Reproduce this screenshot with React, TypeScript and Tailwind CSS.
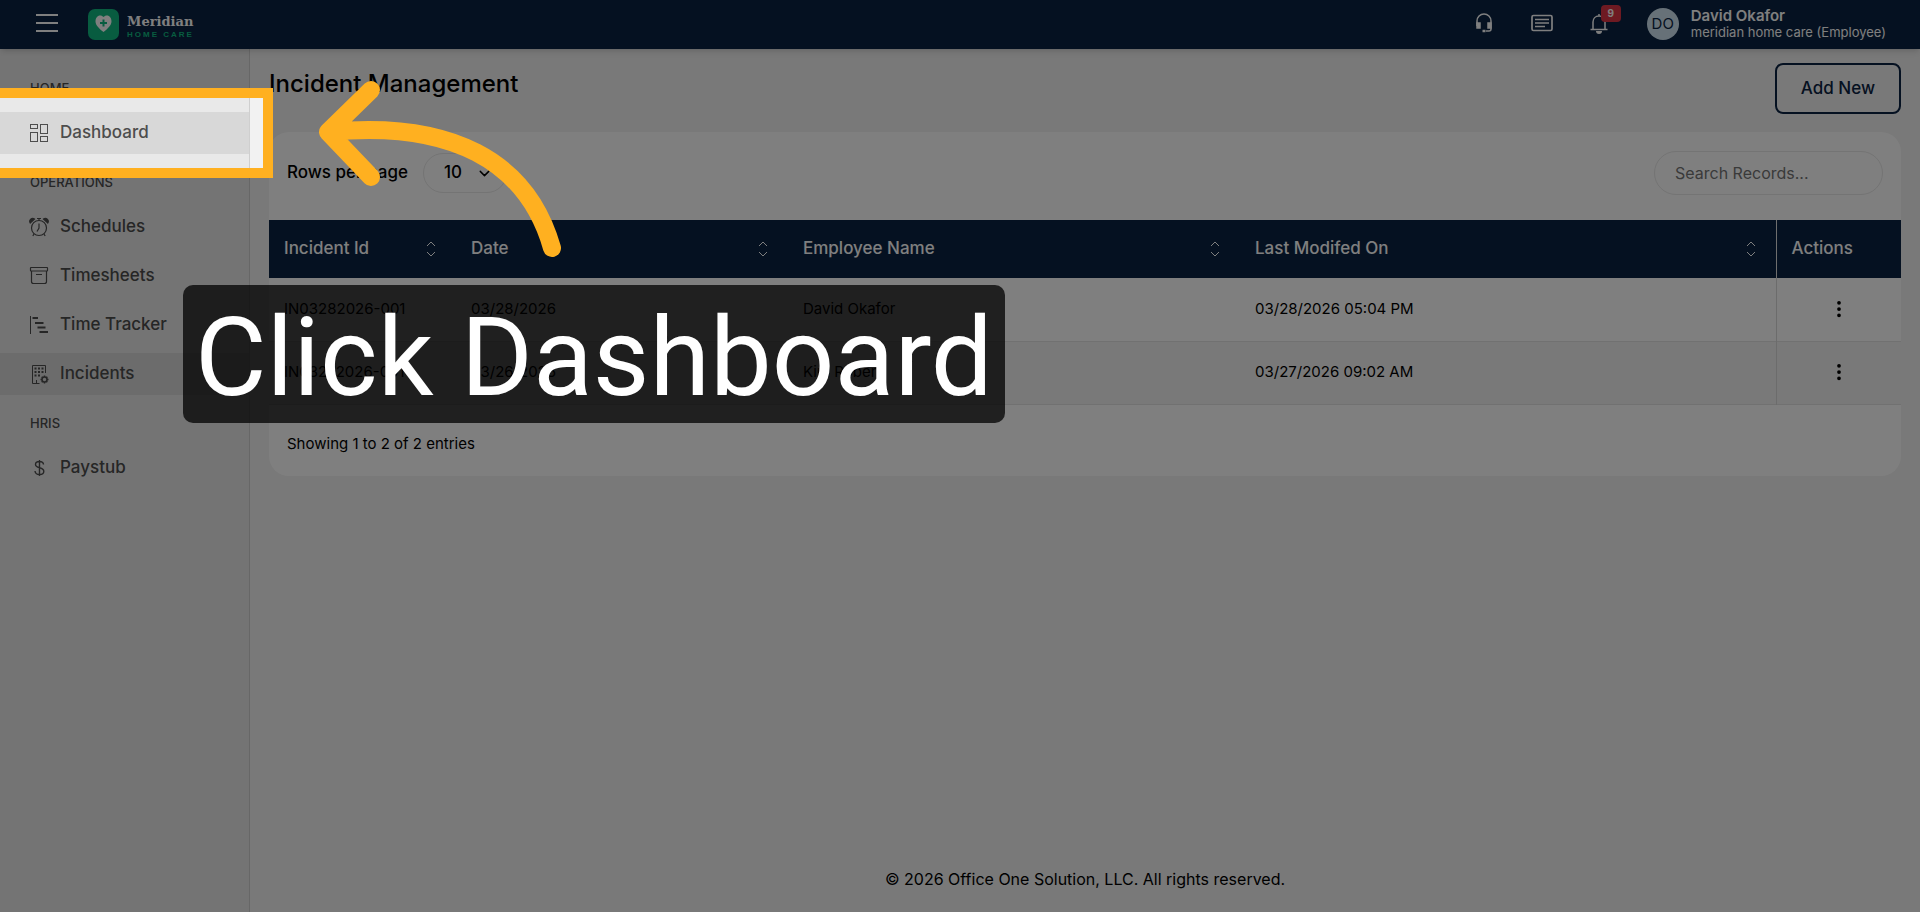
import React from 'react';
import { LuChevronDown } from 'react-icons/lu';
import { BsThreeDotsVertical } from 'react-icons/bs';

interface Incident {
    id: string;
    date: string;
    employee: string;
    modified: string;
}

interface NavItem {
    label: string;
    icon: React.ReactNode;
    active?: boolean;
}

interface NavSection {
    title: string;
    items: NavItem[];
}

const incidents: Incident[] = [
    { id: 'IN03282026-001', date: '03/28/2026', employee: 'David Okafor', modified: '03/28/2026 05:04 PM' },
    { id: 'IN03272026-001', date: '03/26/2026', employee: 'Kim Robert', modified: '03/27/2026 09:02 AM' },
];

const columns = [
    { title: 'Incident Id', width: 'w-[187px]' },
    { title: 'Date', width: 'w-[332px]' },
    { title: 'Employee Name', width: 'w-[452px]' },
    { title: 'Last Modifed On', width: '' },
];

const DashboardIcon = () => (
    <svg width="20" height="20" viewBox="0 0 20 20" fill="none" stroke="currentColor" strokeWidth="1">
        <rect x="1.5" y="1.5" width="7" height="4" />
        <rect x="11.5" y="1.5" width="7" height="9" />
        <rect x="1.5" y="9.5" width="7" height="9" />
        <rect x="11.5" y="13.5" width="7" height="5" />
    </svg>
);

const AlarmIcon = () => (
    <svg width="20" height="20" viewBox="0 0 20 20" fill="none" stroke="currentColor" strokeWidth="1.2">
        <circle cx="10" cy="11" r="7.5" />
        <path d="M10 6.5v4.5l-2 3.5M10 3.5V1.5M8 1.5h4M5 17.2l-1.2 1.8M15 17.2l1.2 1.8" />
        <path d="M1.2 6A3 3 0 0 1 5.5 2L1.2 6zM18.8 6A3 3 0 0 0 14.5 2l4.3 4z" fill="currentColor" />
    </svg>
);

const ArchiveIcon = () => (
    <svg width="20" height="20" viewBox="0 0 20 20" fill="none" stroke="currentColor" strokeWidth="1.2">
        <rect x="1.5" y="1.5" width="17" height="3.5" rx="0.5" />
        <path d="M2.5 5v10.5a2 2 0 0 0 2 2h11a2 2 0 0 0 2-2V5M7 8.5h6" />
    </svg>
);

const TrackerIcon = () => (
    <svg width="20" height="20" viewBox="0 0 20 20" fill="none" stroke="currentColor">
        <path d="M1.5 1v18" strokeWidth="1" />
        <path d="M3.5 3h5.5M6 8h8.5M8.5 12.5h8M10.5 17h8.5" strokeWidth="2" />
    </svg>
);

const BuildingIcon = () => (
    <svg width="20" height="20" viewBox="0 0 20 20" fill="none" stroke="currentColor" strokeWidth="1">
        <path d="M10.5 19.5h-7V1.5h13V9M7.5 19.5v-3.5" />
        <path d="M5.5 4.5h2M9 4.5h2M12.5 4.5h2M5.5 8h2M9 8h2M12.5 8h2M5.5 11.5h2M9 11.5h2" strokeWidth="2" />
        <circle cx="15.5" cy="15.5" r="2.5" strokeWidth="1.5" />
        <path d="M15.5 11.5v1.5M15.5 18v1.5M11.5 15.5h1.5M18 15.5h1.5M12.7 12.7l1 1M17.3 17.3l1 1M18.3 12.7l-1 1M12.7 18.3l1-1" strokeWidth="1.5" />
    </svg>
);

const DollarIcon = () => (
    <svg width="20" height="20" viewBox="0 0 20 20" fill="none" stroke="currentColor" strokeWidth="1.4">
        <path d="M10.5 2v16M14.5 6.5c-.2-2-1.7-3-4-3-2.5 0-4 1.1-4 3 0 4.5 8.3 2 8.3 6.7 0 2-1.7 3.3-4.3 3.3-2.7 0-4.3-1.2-4.5-3.5" />
    </svg>
);

const SortIcon = () => (
    <svg width="10" height="16" viewBox="0 0 10 16" fill="none" stroke="currentColor" strokeWidth="1">
        <path d="M1 5l4-4 4 4M1 11l4 4 4-4" />
    </svg>
);

const sections: NavSection[] = [
    { title: 'HOME', items: [{ label: 'Dashboard', icon: <DashboardIcon />, active: true }] },
    {
        title: 'OPERATIONS',
        items: [
            { label: 'Schedules', icon: <AlarmIcon /> },
            { label: 'Timesheets', icon: <ArchiveIcon /> },
            { label: 'Time Tracker', icon: <TrackerIcon /> },
            { label: 'Incidents', icon: <BuildingIcon />, active: true },
        ],
    },
    { title: 'HRIS', items: [{ label: 'Paystub', icon: <DollarIcon /> }] },
];

const Header = () => (
    <header className="relative flex h-[49px] items-center bg-[#0a2242] pr-8 pb-[3px] pl-9 text-white shadow-md">
        <button aria-label="Toggle menu" className="flex w-[22px] flex-col gap-[6px]">
            <span className="h-[2px] w-full bg-white"></span>
            <span className="h-[2px] w-full bg-white"></span>
            <span className="h-[2px] w-full bg-white"></span>
        </button>

        <a href="#" className="ml-[30px] flex items-center gap-2 pt-[3px]">
            <svg width="31" height="31" viewBox="0 0 31 31">
                <rect width="31" height="31" rx="7" fill="#10b981" />
                <path d="M15.5 23C11 19.5 7.5 16 7.5 12.5c0-3.5 2-6 4.5-6 1.5 0 2.7.6 3.5 1.5.8-.9 2-1.5 3.5-1.5 2.5 0 4.5 2.5 4.5 6 0 3.5-3.5 7-8 10.5z" fill="#fff" />
                <path d="M15.5 10.5v7M12 14h7" stroke="#10b981" strokeWidth="2" />
            </svg>
            <span className="flex flex-col pt-[6px]">
                <span className="font-['DejaVu_Serif',serif] text-[13px] leading-[14px] font-bold">Meridian</span>
                <span className="font-['Liberation_Sans',sans-serif] text-[8px] leading-[11px] font-bold tracking-[2px] text-[#10b981]">HOME CARE</span>
            </span>
        </a>

        <div className="ml-auto flex items-center">
            <button aria-label="Support" className="mr-[37px]">
                <svg width="20" height="20" viewBox="0 0 20 20" fill="none" stroke="currentColor" strokeWidth="1.5">
                    <path d="M3 13V8a7 7 0 0 1 14 0v8a2 2 0 0 1-2 2h-3" />
                    <rect x="3" y="10" width="3" height="5" fill="currentColor" />
                    <rect x="14" y="10" width="3" height="5" fill="currentColor" />
                    <path d="M8.5 18h3" strokeWidth="2.5" />
                </svg>
            </button>
            <button aria-label="Messages" className="mr-[36px]">
                <svg width="22" height="18" viewBox="0 0 22 18" fill="none" stroke="currentColor" strokeWidth="1.7">
                    <rect x="1" y="1.5" width="20" height="15" rx="1.5" />
                    <path d="M4 5.5h14M4 9h14M4 12.5h10" />
                </svg>
            </button>
            <button aria-label="Notifications" className="relative mr-[38px]">
                <svg width="20" height="22" viewBox="0 0 20 22" fill="none" stroke="currentColor" strokeWidth="1.5">
                    <path d="M1.5 17.5h17M4 17.5V10c0-3.5 2.5-6 6-6s6 2.5 6 6v7.5M10 4V2" />
                    <path d="M7 19h6a3 3 0 0 1-6 0z" fill="currentColor" stroke="none" />
                </svg>
                <span className="absolute -top-[7px] left-3 flex h-[17px] w-[20px] items-center justify-center rounded-[4px] bg-[#dc3545] text-[10px] font-bold">9</span>
            </button>
            <button className="flex items-center gap-3 text-left">
                <span className="mt-[2px] flex h-8 w-8 items-center justify-center rounded-full bg-[#cfe2f0] text-[15px] text-[#0a2242]">DO</span>
                <span className="flex flex-col pr-[2px]">
                    <span className="text-[15px] leading-[17px] font-semibold">David Okafor</span>
                    <span className="text-[13px] leading-[16px]">meridian home care (Employee)</span>
                </span>
            </button>
        </div>
    </header>
);

const Sidebar = () => (
    <nav className="w-[250px] shrink-0 border-r border-[#cfcfcf] bg-[#e9e9e9] pt-[11px] text-[#4d4d4d]">
        {sections.map((section) => (
            <div key={section.title}>
                <h2 className="flex h-[52px] items-center pt-[6px] pl-[30px] text-[13px] font-medium">{section.title}</h2>
                <ul className="flex flex-col gap-[7px]">
                    {section.items.map((item) => (
                        <li key={item.label}>
                            <a
                                href="#"
                                className={`flex h-[42px] items-center gap-[11px] pl-[29px] text-[17px] font-medium ${item.active ? 'bg-[#d8d8d8]' : ''}`}
                            >
                                {item.icon}
                                {item.label}
                            </a>
                        </li>
                    ))}
                </ul>
            </div>
        ))}
    </nav>
);

const IncidentTable = () => (
    <table className="w-full table-fixed border-collapse text-left text-[15px]">
        <thead>
            <tr className="h-[58px] bg-[#0a2242] text-[17px] text-white">
                {columns.map((column) => (
                    <th key={column.title} className={`px-[15px] font-medium ${column.width}`}>
                        <div className="flex items-center justify-between pr-[5px]">
                            {column.title}
                            <SortIcon />
                        </div>
                    </th>
                ))}
                <th className="w-[125px] border-l border-[#dcdcdc] px-[15px] font-medium">Actions</th>
            </tr>
        </thead>
        <tbody>
            {incidents.map((incident) => (
                <tr key={incident.id} className="h-[63px] border-b border-[#e3e3e3] even:bg-[#f2f2f2]">
                    <td className="px-[15px]">{incident.id}</td>
                    <td className="px-[15px]">{incident.date}</td>
                    <td className="px-[15px]">{incident.employee}</td>
                    <td className="px-[15px]">{incident.modified}</td>
                    <td className="border-l border-[#d8d8d8] pb-[2px] text-center">
                        <button aria-label={`Actions for ${incident.id}`} className="align-middle text-[20px]">
                            <BsThreeDotsVertical />
                        </button>
                    </td>
                </tr>
            ))}
        </tbody>
    </table>
);

// Dims everything but the highlighted menu item and points an arrow at it
const GuideOverlay = () => (
    <>
        <div className="pointer-events-none absolute top-[88px] -left-[10px] h-[90px] w-[283px] border-[10px] border-[#ffb020] shadow-[0_0_0_3000px_rgba(0,0,0,0.5)]"></div>
        <svg className="pointer-events-none absolute top-[70px] left-[310px]" width="260" height="200" viewBox="0 0 260 200" fill="none" stroke="#ffb020" strokeWidth="18" strokeLinecap="round" strokeLinejoin="round">
            <path d="M61 20L18 62l43 45M18 62C140 50 217 90 242 178" />
        </svg>
        <div className="pointer-events-none absolute top-[285px] left-[183px] flex h-[138px] items-center rounded-[10px] bg-black/75 px-3 pt-2 font-['Roboto',sans-serif] text-[110px] leading-none whitespace-nowrap text-white">
            Click Dashboard
        </div>
    </>
);

export default function App() {
    return (
        <div className="relative flex min-h-screen flex-col overflow-hidden bg-[#f2f2f2] font-['Inter',sans-serif] text-black">
            <Header />
            <div className="flex flex-1">
                <Sidebar />
                <main className="flex min-w-0 flex-1 flex-col px-[19px] pt-[14px]">
                    <div className="flex items-start justify-between">
                        <h1 className="pt-[5px] text-[24px] leading-[32px] font-medium">Incident Management</h1>
                        <button className="h-[51px] rounded-lg border-2 border-[#0a2242] px-6 text-[17px] font-medium text-[#0a2242]">
                            Add New
                        </button>
                    </div>

                    <section className="mt-[18px] rounded-[20px] bg-white">
                        <div className="flex h-[88px] items-center justify-between px-[18px] pb-[6px]">
                            <label className="flex items-center gap-[15px] text-[17px] font-medium">
                                Rows per page
                                <span className="relative flex items-center">
                                    <select className="h-10 w-[84px] appearance-none rounded-full border border-[#e8e8e8] pl-5" defaultValue="10">
                                        <option>10</option>
                                        <option>25</option>
                                        <option>50</option>
                                    </select>
                                    <LuChevronDown className="pointer-events-none absolute right-[14px]" />
                                </span>
                            </label>
                            <input
                                type="search"
                                aria-label="Search records"
                                placeholder="Search Records..."
                                className="h-11 w-[229px] rounded-full border border-[#e8e8e8] px-5 text-[16px] placeholder:text-[#757575]"
                            />
                        </div>
                        <IncidentTable />
                        <p className="flex h-[71px] items-center px-[18px] pt-2 text-[15px]">Showing 1 to 2 of 2 entries</p>
                    </section>

                    <footer className="mt-auto pb-[21px] text-center text-[16px] leading-6">
                        © 2026 Office One Solution, LLC. All rights reserved.
                    </footer>
                </main>
            </div>
            <GuideOverlay />
        </div>
    );
}
